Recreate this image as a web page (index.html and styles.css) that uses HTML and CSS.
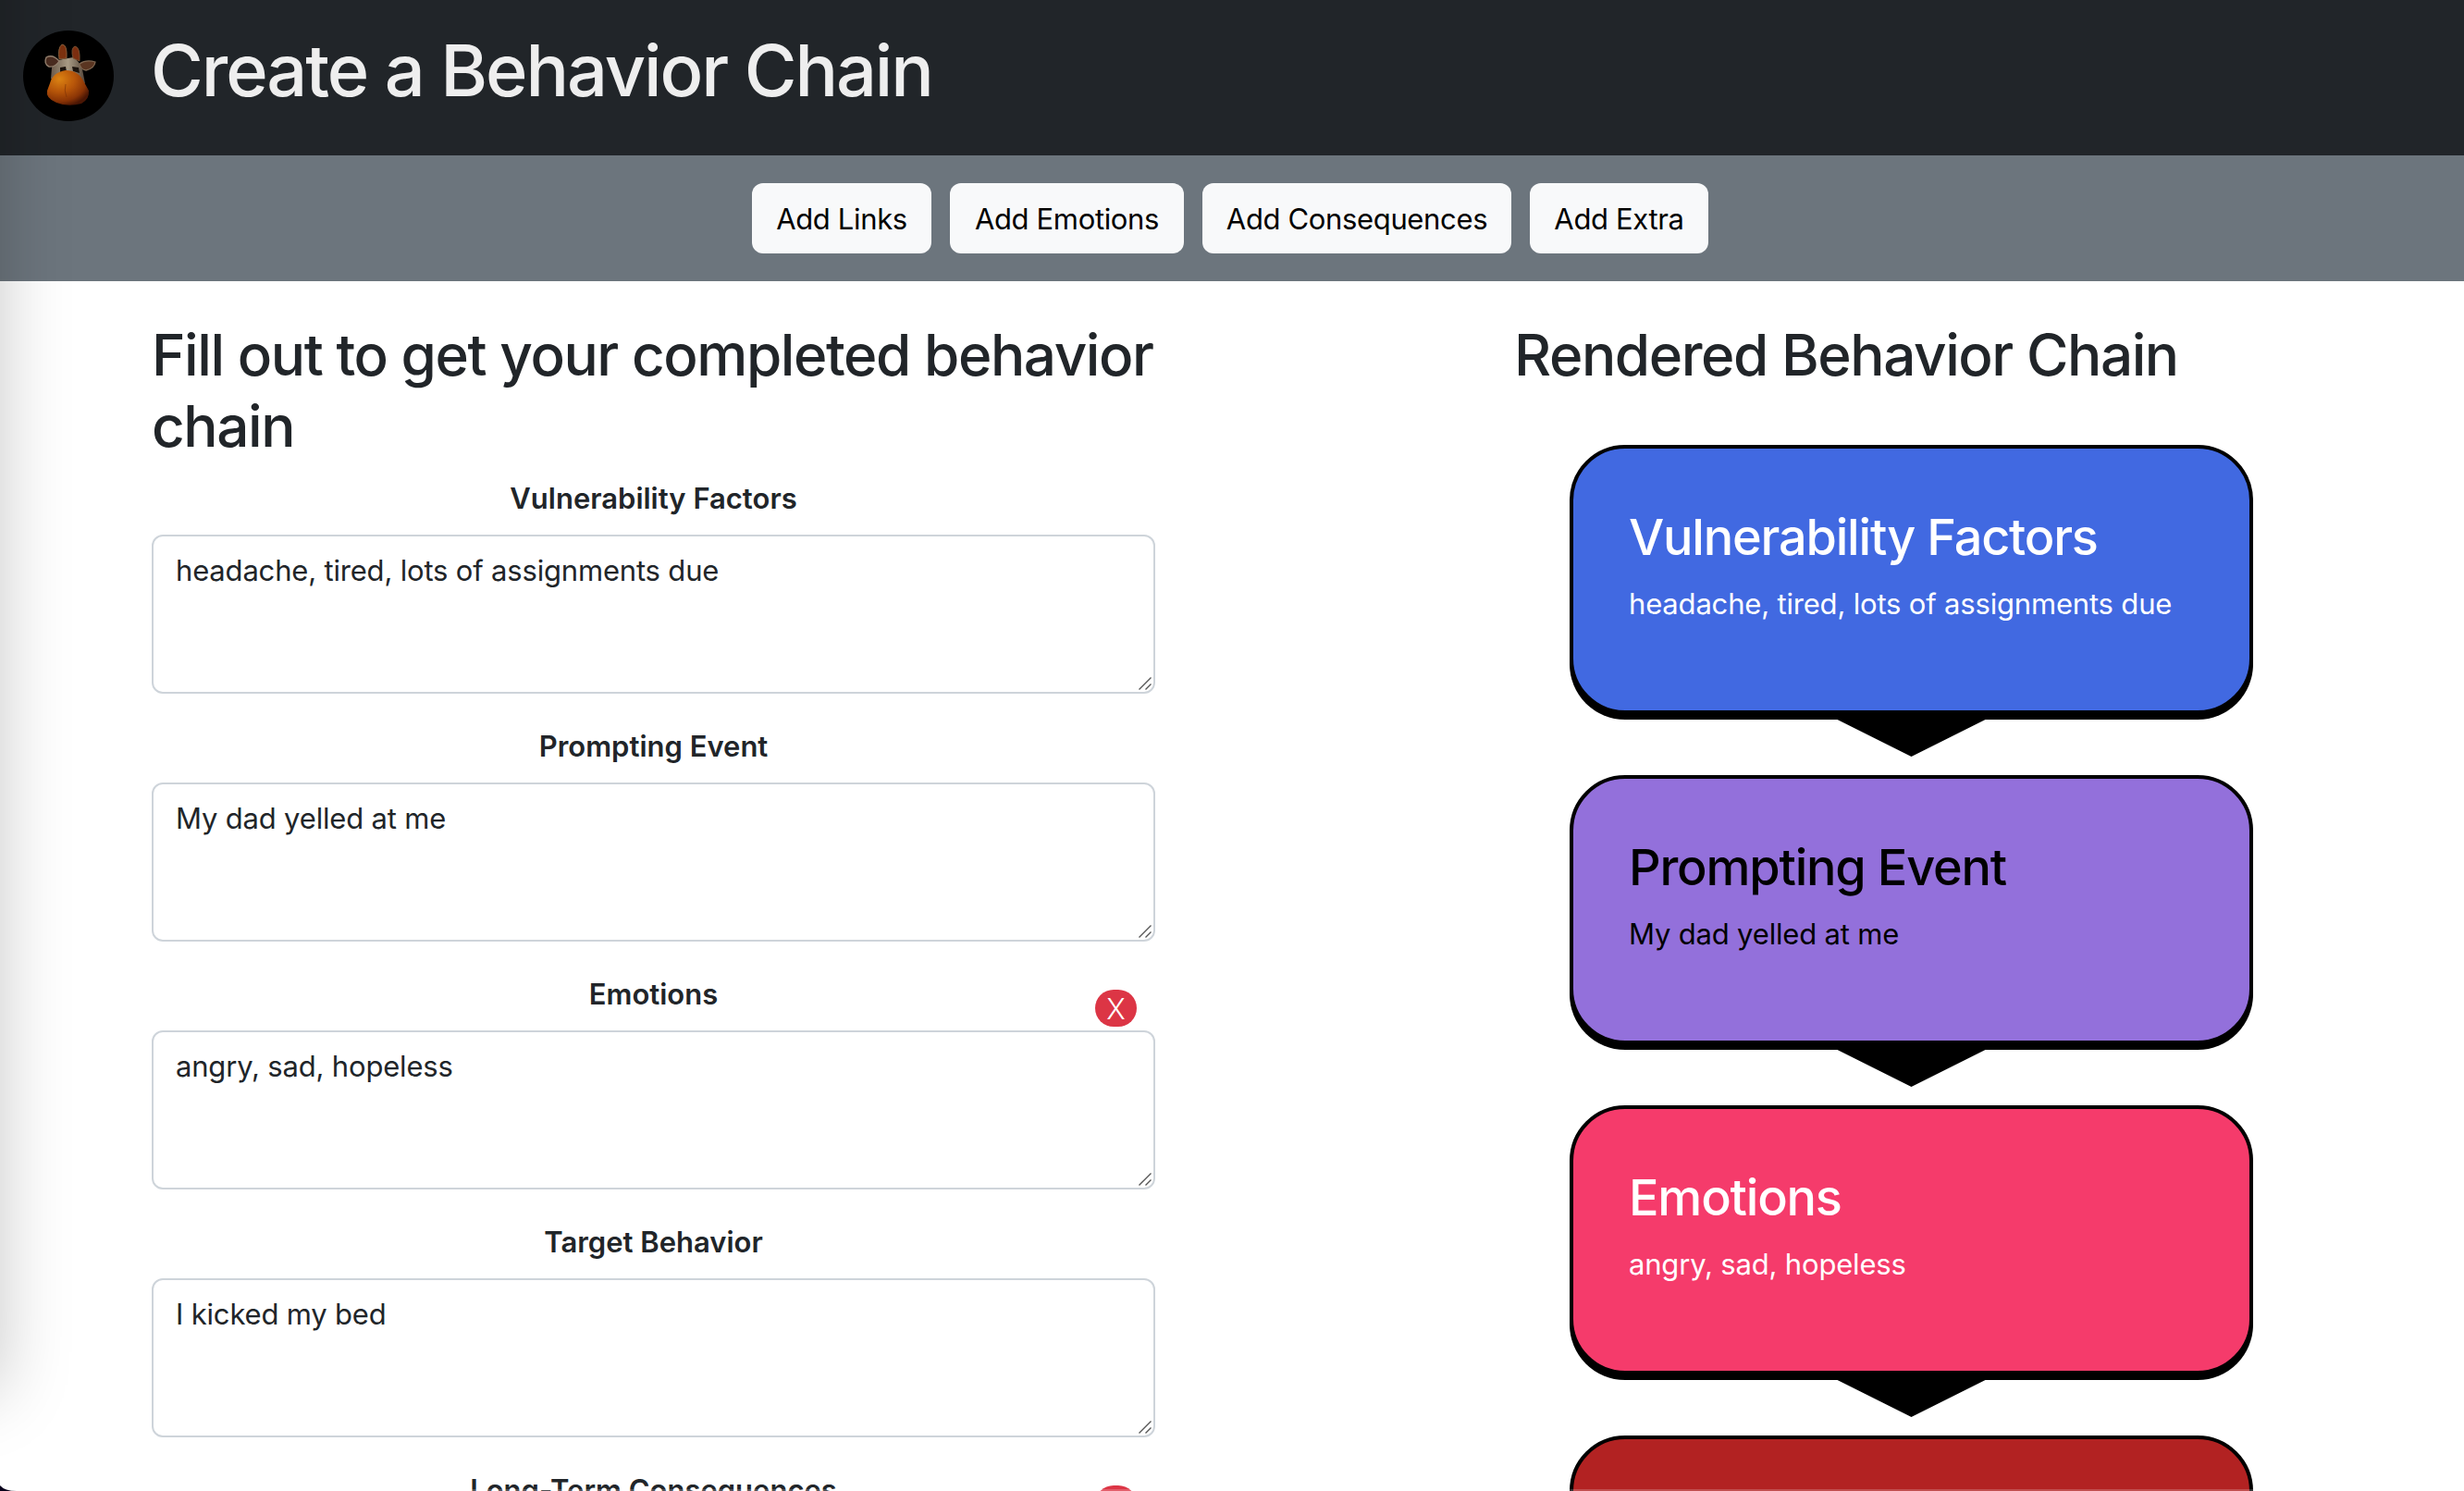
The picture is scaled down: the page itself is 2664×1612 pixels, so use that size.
FILE: index.html
```html
<!DOCTYPE html>
<html lang="en">
<head>
<meta charset="utf-8">
<title>Create a Behavior Chain</title>
<link rel="stylesheet" href="styles.css">
</head>
<body>
<header class="header">
  <svg class="logo" viewBox="0 0 98 98" aria-hidden="true">
    <defs>
      <radialGradient id="nose" cx=".3" cy=".25" r=".8"><stop offset="0" stop-color="#dd8414"/><stop offset=".45" stop-color="#b9570a"/><stop offset=".8" stop-color="#8a3406"/><stop offset="1" stop-color="#4a1604"/></radialGradient>
      <linearGradient id="face" x1="0" x2="1"><stop offset="0" stop-color="#6e5c4c"/><stop offset=".5" stop-color="#a99b85"/><stop offset="1" stop-color="#54463a"/></linearGradient>
    </defs>
    <circle cx="49" cy="49" r="49" fill="#000"/>
    <path d="M30 52L31 40Q34 32 43 31L54 29Q61 33 64 42L67 57Q50 65 30 52Z" fill="url(#face)"/>
    <path d="M39 31Q37 19 42 15Q48 15 47 30Z" fill="#7c3210" stroke="#8f6a45" stroke-width=".8"/>
    <path d="M54 30Q51 19 56 17Q62 18 61 33Z" fill="#7c2e10" stroke="#7d5a3a" stroke-width=".8"/>
    <path d="M39 33Q32 25 25 29Q22 36 28 39Q35 40 39 33Z" fill="#4a2c20" stroke="#94806e" stroke-width="1.4"/>
    <path d="M61 36Q68 31 78 34Q77 41 68 43Q62 42 61 36Z" fill="#5a3521" stroke="#7e6650" stroke-width="1.3"/>
    <path d="M40 40L46 39L47 45L40 46ZM53 39L60 40L61 46L54 44Z" fill="#1c130d"/>
    <path d="M29 57Q32 45 46 43Q60 43 66 56L71 65Q72 74 63 79Q48 83 36 78Q24 73 26 65Z" fill="url(#nose)"/>
    <path d="M46 58Q44 65 47 72" fill="none" stroke="#7a3006" opacity=".6"/>
  </svg>
  <h1 class="title">Create a Behavior Chain</h1>
</header>
<nav class="toolbar">
  <button class="btn btn-links">Add Links</button>
  <button class="btn btn-emotions">Add Emotions</button>
  <button class="btn btn-consequences">Add Consequences</button>
  <button class="btn btn-extra">Add Extra</button>
</nav>
<main class="content">
  <form class="form">
    <h2 class="heading">Fill out to get your completed behavior chain</h2>
    <div class="field"><label class="label">Vulnerability Factors</label><div class="input"><span class="value">headache, tired, lots of assignments due</span><svg class="grip" viewBox="0 0 14 14"><path d="M.5 13.5L13.5.5M7.5 13.5L13.5 7.5"/></svg></div></div>
    <div class="field"><label class="label">Prompting Event</label><div class="input"><span class="value">My dad yelled at me</span><svg class="grip" viewBox="0 0 14 14"><path d="M.5 13.5L13.5.5M7.5 13.5L13.5 7.5"/></svg></div></div>
    <div class="field"><label class="label">Emotions</label><span class="remove">X</span><div class="input"><span class="value">angry, sad, hopeless</span><svg class="grip" viewBox="0 0 14 14"><path d="M.5 13.5L13.5.5M7.5 13.5L13.5 7.5"/></svg></div></div>
    <div class="field"><label class="label">Target Behavior</label><div class="input"><span class="value">I kicked my bed</span><svg class="grip" viewBox="0 0 14 14"><path d="M.5 13.5L13.5.5M7.5 13.5L13.5 7.5"/></svg></div></div>
    <div class="field"><label class="label">Long-Term Consequences</label><span class="remove"></span><div class="input"></div></div>
  </form>
  <section class="rendered">
    <h2 class="heading">Rendered Behavior Chain</h2>
    <div class="chain">
      <article class="card blue"><h3 class="card-title">Vulnerability Factors</h3><p class="card-text">headache, tired, lots of assignments due</p></article>
      <article class="card purple"><h3 class="card-title">Prompting Event</h3><p class="card-text">My dad yelled at me</p></article>
      <article class="card pink"><h3 class="card-title">Emotions</h3><p class="card-text">angry, sad, hopeless</p></article>
      <article class="card red"></article>
    </div>
  </section>
</main>
<div class="edge-shadow"></div>
<div class="bottom-line"></div>
<svg class="corner" viewBox="0 0 18 6"><path d="M0 0Q5 6 18 6H0Z" fill="#08001a"/></svg>
</body>
</html>
```
FILE: styles.css
```css
* { box-sizing: border-box; }
html, body { height: 100%; }
body { margin: 0; overflow: hidden; position: relative; background: #fff; color: #212529; font: 400 31px/48px Inter, "Liberation Sans", sans-serif; }
h1, h2, h3, p { margin: 0; font-weight: 500; }
.header { height: 168px; background: #212529; display: flex; align-items: flex-start; padding: 33px 24px 0 25px; }
.logo { width: 98px; height: 98px; flex: none; }
.title { margin: -5px 0 0 40px; color: #eee; font-size: 77.5px; line-height: 96px; white-space: nowrap; letter-spacing: -2.1px; }
.toolbar { height: 136px; background: #6c757d; display: flex; justify-content: center; align-items: center; gap: 20px; padding-right: 4px; }
.btn { height: 76px; border: 0; border-radius: 12px; background: #f8f9fa; color: #000; font: inherit; padding: 2px 0 0; letter-spacing: -.35px; white-space: nowrap; }
.btn-links { width: 194px; }
.btn-emotions { width: 253px; }
.btn-consequences { width: 334px; }
.btn-extra { width: 193px; }
.content { display: flex; height: 1308px; overflow: hidden; padding: 41px 0 0 164px; }
.form { width: 1085px; flex: none; }
.heading { font-size: 62px; line-height: 77px; letter-spacing: -1.43px; }
.form .heading { margin-bottom: 15px; }
.field { position: relative; height: 268px; display: flex; flex-direction: column; }
.label { height: 64px; padding-top: 1px; text-align: center; font-weight: 600; letter-spacing: 0; }
.input { position: relative; height: 172px; border: 2px solid #ced4da; border-radius: 12px; padding: 13px 24px; }
.value, .card-text { letter-spacing: -.18px; }
.grip { position: absolute; right: 2px; bottom: 2px; width: 14px; height: 14px; fill: none; stroke: #555; stroke-width: 1.4; }
.remove { position: absolute; right: 20px; top: 20px; width: 45px; height: 40px; border-radius: 20px; background: #dc3545; color: #fff; text-align: center; line-height: 42px; font-weight: 350; }
.rendered { margin-left: 388px; width: 860px; }
.chain { margin: 59px 0 0 60px; width: 739px; display: flex; flex-direction: column; gap: 66px; }
.card { position: relative; height: 291px; border: 4px solid #000; border-radius: 60px; box-shadow: 0 6px #000; padding: 62px 60px 56px; color: #fff; }
.card::after { content: ""; position: absolute; left: 50%; bottom: -50px; margin-left: -82px; width: 164px; height: 41px; background: #000; clip-path: polygon(0 0, 100% 0, 50% 100%); }
.card-title { font-size: 54px; line-height: 67px; margin-bottom: 15px; white-space: nowrap; letter-spacing: -1.2px; }
.card-text { font-weight: 400; white-space: nowrap; }
.blue { background: #4169e1; }
.purple { background: #9370db; color: #000; }
.pink { background: #f53b6b; }
.red { background: #b22222; }
.edge-shadow { position: absolute; left: -200px; top: -100px; width: 200px; height: 1605px; box-shadow: 0 0 78px rgba(0,0,0,.22); pointer-events: none; }
.bottom-line { position: absolute; left: 0; right: 0; bottom: 0; height: 2px; background: rgba(255,255,255,.2); }
.corner { position: absolute; left: 0; bottom: 0; width: 18px; height: 6px; }
```
